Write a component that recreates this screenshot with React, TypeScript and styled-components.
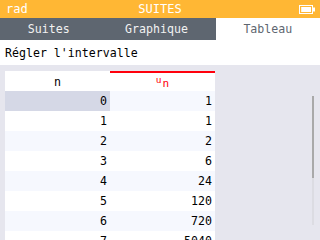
import styled, { createGlobalStyle } from "styled-components";

const GlobalStyle = createGlobalStyle`
  html, body { margin: 0; padding: 0; }
  body {
    width: 320px;
    height: 240px;
    overflow: hidden;
    font-family: "DejaVu Sans Mono", "Liberation Mono", monospace;
  }
`;

const rows = [
  { n: 0, u: 1 },
  { n: 1, u: 1 },
  { n: 2, u: 2 },
  { n: 3, u: 6 },
  { n: 4, u: 24 },
  { n: 5, u: 120 },
  { n: 6, u: 720 },
  { n: 7, u: 5040 },
];

const tabs = ["Suites", "Graphique", "Tableau"];

export default function App() {
  return (
    <Screen>
      <GlobalStyle />
      <TitleBar>
        <Angle>rad</Angle>
        <AppName>SUITES</AppName>
        <Battery width="16" height="9" viewBox="0 0 16 9">
          <rect x="0.5" y="0.5" width="13" height="8" fill="none" stroke="#fff" />
          <rect x="3" y="2" width="9" height="5" fill="#fff" />
          <rect x="2" y="2" width="0.8" height="5" fill="#fff" />
          <rect x="14" y="2.5" width="2" height="4" fill="#fff" />
        </Battery>
      </TitleBar>
      <TabBar>
        {tabs.map((t) => (
          <Tab key={t} $active={t === "Tableau"}>
            {t}
          </Tab>
        ))}
      </TabBar>
      <IntervalRow>Régler l'intervalle</IntervalRow>
      <Body>
        <Table>
          <HeaderCell>n</HeaderCell>
          <HeaderCell $seq>
            <SeqU>u</SeqU>
            <SeqN>n</SeqN>
          </HeaderCell>
          {rows.map((r, i) => (
            <Row key={r.n}>
              <Cell $odd={i % 2 === 1} $selected={i === 0}>
                {r.n}
              </Cell>
              <Cell $odd={i % 2 === 1}>{r.u}</Cell>
            </Row>
          ))}
        </Table>
        <ScrollTrack>
          <ScrollThumb />
        </ScrollTrack>
      </Body>
    </Screen>
  );
}

const Screen = styled.div`
  width: 320px;
  height: 240px;
  display: flex;
  flex-direction: column;
  overflow: hidden;
  background: #e6e6ee;
`;

const TitleBar = styled.div`
  flex-shrink: 0;
  height: 18px;
  background: #ffb734;
  color: #fff;
  display: flex;
  align-items: center;
  padding: 0 5px 0 6px;
  font-size: 12px;
  position: relative;
`;

const Angle = styled.span`
  flex: 1;
`;

const AppName = styled.span`
  position: absolute;
  left: 0;
  right: 0;
  text-align: center;
  pointer-events: none;
`;

const Battery = styled.svg`
  display: block;
`;

const TabBar = styled.div`
  flex-shrink: 0;
  height: 22px;
  display: flex;
  background: #5e6670;
`;

const Tab = styled.div<{ $active?: boolean }>`
  flex: 1 1 auto;
  display: flex;
  align-items: center;
  justify-content: center;
  font-size: 11.6px;
  color: ${(p) => (p.$active ? "#5e6670" : "#f2f2f2")};
  background: ${(p) => (p.$active ? "#fff" : "transparent")};
`;

const IntervalRow = styled.div`
  flex-shrink: 0;
  height: 25px;
  background: #fff;
  display: flex;
  align-items: center;
  padding-left: 5px;
  font-size: 11.6px;
  color: #000;
`;

const Body = styled.div`
  flex: 1;
  min-height: 0;
  overflow: hidden;
  display: flex;
  align-items: flex-start;
  padding: 6px 0 0 5px;
`;

const Table = styled.div`
  width: 210px;
  flex-shrink: 0;
  display: grid;
  grid-template-columns: 105px 105px;
  grid-auto-rows: 20px;
`;

const Row = styled.div`
  display: contents;
`;

const HeaderCell = styled.div<{ $seq?: boolean }>`
  background: #fff;
  display: flex;
  align-items: center;
  justify-content: center;
  font-size: 11.6px;
  color: #000;
  border-top: 2px solid ${(p) => (p.$seq ? "#ff000c" : "#fff")};
  box-sizing: border-box;
  padding-bottom: 1px;
`;

const SeqU = styled.span`
  color: #ff000c;
  font-size: 9.5px;
  position: relative;
  top: -2px;
`;

const SeqN = styled.span`
  color: #ff000c;
  font-size: 11px;
  position: relative;
  top: 2px;
  margin-left: 1px;
`;

const Cell = styled.div<{ $odd?: boolean; $selected?: boolean }>`
  display: flex;
  align-items: center;
  justify-content: flex-end;
  padding-right: 3px;
  font-size: 11.6px;
  color: #000;
  background: ${(p) => (p.$selected ? "#d5d8e6" : p.$odd ? "#fff" : "#f6f8fe")};
`;

const ScrollTrack = styled.div`
  flex-shrink: 0;
  margin: 25px 6px 0 auto;
  width: 2px;
  height: 129px;
  background: #dcdce2;
`;

const ScrollThumb = styled.div`
  height: 82px;
  background: #a9a9a9;
`;
